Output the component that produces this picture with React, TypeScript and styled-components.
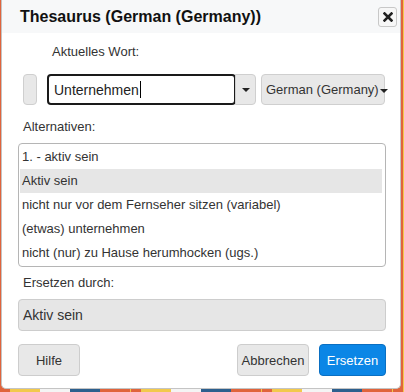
import React from "react";
import styled, { createGlobalStyle } from "styled-components";

const GlobalStyle = createGlobalStyle`
    html, body {
        margin: 0;
        padding: 0;
    }
    body {
        font-family: "Liberation Sans", Arial, sans-serif;
        color: #333;
    }
`

const Page = styled.div`
    width: 404px;
    height: 392px;
    overflow: hidden;
    background: repeating-linear-gradient(
        to right,
        #e0643c 0 10px,
        #f2c94c 10px 40px,
        #f4f4f4 40px 70px,
        #2d5f8e 70px 100px,
        #e0643c 100px 130px,
        #f2c94c 130px 131px
    );
    background-color: #d9d9d9;
`
const Dialog = styled.div`
    width: 400px;
    margin-left: 1px;
    box-sizing: border-box;
    background: #fff;
    border: 1px solid #c4c4c4;
    border-top: none;
    border-radius: 0 0 5px 5px;
    display: flex;
    flex-direction: column;
`
const Header = styled.div`
    height: 33px;
    background: #f7f8f9;
    display: flex;
    align-items: center;
    justify-content: space-between;
    padding: 0 3px 0 18px;
`
const Title = styled.h1`
    margin: 0;
    font-size: 16px;
    font-weight: bold;
    color: #111;
`
const CloseButton = styled.button`
    width: 19px;
    height: 20px;
    padding: 0;
    margin-top: 1px;
    background: #f7f7f7;
    border: 1px solid #c8c8c8;
    border-radius: 3px;
    display: flex;
    align-items: center;
    justify-content: center;
    color: #222;
`
const Body = styled.div`
    padding: 11px 14px 12px 16px;
    display: flex;
    flex-direction: column;
`
const Label = styled.div<{ $indent?: number; $top?: number }>`
    font-size: 13px;
    line-height: 16px;
    margin-left: ${(p) => p.$indent ?? 5}px;
    margin-top: ${(p) => p.$top ?? 0}px;
`
const WordRow = styled.div`
    margin-top: 14px;
    height: 31px;
    display: flex;
    align-items: stretch;
`
const SmallButton = styled.div`
    width: 14px;
    margin-left: 5px;
    margin-right: 10px;
    box-sizing: border-box;
    background: #e8e8e8;
    border: 1px solid #cfcfcf;
    border-radius: 4px;
`
const WordInput = styled.div`
    width: 189px;
    box-sizing: border-box;
    border: 2px solid #1a1a1a;
    border-radius: 4px;
    padding-left: 5px;
    display: flex;
    align-items: center;
    font-size: 14px;
    color: #222;
`
const Caret = styled.span`
    display: inline-block;
    width: 1px;
    height: 17px;
    background: #000;
    margin-left: 1px;
`
const DropButton = styled.div`
    width: 21px;
    margin-left: -1px;
    box-sizing: border-box;
    background: #e8e8e8;
    border: 1px solid #cfcfcf;
    border-radius: 0 4px 4px 0;
    display: flex;
    align-items: center;
    justify-content: center;
`
const Arrow = styled.span`
    flex: none;
    width: 0;
    height: 0;
    border-left: 4px solid transparent;
    border-right: 4px solid transparent;
    border-top: 4px solid #222;
`
const LangSelect = styled.div`
    width: 124px;
    margin-left: 5px;
    box-sizing: border-box;
    background: #e8e8e8;
    border: 1px solid #cfcfcf;
    border-radius: 4px;
    padding: 0 3px 0 4px;
    display: flex;
    align-items: center;
    white-space: nowrap;
    font-size: 13px;
    color: #333;
    ${Arrow} {
        margin-top: 3px;
        margin-left: 1px;
    }
`
const AltList = styled.ul`
    margin: 8px 0 0;
    list-style: none;
    height: 124px;
    box-sizing: border-box;
    border: 1px solid #b5b5b5;
    border-radius: 4px;
    padding: 1px 3px 1px 1px;
`
const AltItem = styled.li<{ $selected?: boolean }>`
    height: 24px;
    line-height: 24px;
    padding-left: 2px;
    font-size: 13px;
    background: ${(p) => (p.$selected ? "#e6e6e6" : "transparent")};
`
const ReplaceField = styled.div`
    margin-top: 8px;
    height: 32px;
    box-sizing: border-box;
    background: #e6e6e6;
    border: 1px solid #cdcdcd;
    border-radius: 4px;
    padding-left: 4px;
    display: flex;
    align-items: center;
    font-size: 14px;
`
const Footer = styled.div`
    margin-top: 13px;
    display: flex;
    align-items: center;
    gap: 10px;
`
const Button = styled.button<{ $primary?: boolean; $width: number }>`
    height: 32px;
    width: ${(p) => p.$width}px;
    box-sizing: border-box;
    font-family: "Liberation Sans", Arial, sans-serif;
    font-size: 13px;
    padding: 0;
    border-radius: 4px;
    border: 1px solid ${(p) => (p.$primary ? "#0a6fc2" : "#cdcdcd")};
    background: ${(p) => (p.$primary ? "#0b86e6" : "#e8e8e8")};
    color: ${(p) => (p.$primary ? "#fff" : "#333")};
`
const Spacer = styled.div`
    flex: 1;
`

const alternatives = [
    "1. - aktiv sein",
    "Aktiv sein",
    "nicht nur vor dem Fernseher sitzen (variabel)",
    "(etwas) unternehmen",
    "nicht (nur) zu Hause herumhocken (ugs.)",
]

function App() {
    return (
        <Page>
            <GlobalStyle />
            <Dialog>
                <Header>
                    <Title>Thesaurus (German (Germany))</Title>
                    <CloseButton>
                        <svg width="10" height="10" viewBox="0 0 10 10">
                            <path d="M1.5 1.5 L8.5 8.5 M8.5 1.5 L1.5 8.5" stroke="#222" strokeWidth="2.6" strokeLinecap="square" />
                        </svg>
                    </CloseButton>
                </Header>
                <Body>
                    <Label $indent={34}>Aktuelles Wort:</Label>
                    <WordRow>
                        <SmallButton />
                        <WordInput>
                            Unternehmen<Caret />
                        </WordInput>
                        <DropButton>
                            <Arrow />
                        </DropButton>
                        <LangSelect>
                            <span>German (Germany)</span>
                            <Arrow />
                        </LangSelect>
                    </WordRow>
                    <Label $top={14}>Alternativen:</Label>
                    <AltList>
                        {alternatives.map((a, i) => (
                            <AltItem key={a} $selected={i === 1}>{a}</AltItem>
                        ))}
                    </AltList>
                    <Label $top={8}>Ersetzen durch:</Label>
                    <ReplaceField>Aktiv sein</ReplaceField>
                    <Footer>
                        <Button $width={62}>Hilfe</Button>
                        <Spacer />
                        <Button $width={72}>Abbrechen</Button>
                        <Button $width={67} $primary>Ersetzen</Button>
                    </Footer>
                </Body>
            </Dialog>
        </Page>
    );
}

export default App;
